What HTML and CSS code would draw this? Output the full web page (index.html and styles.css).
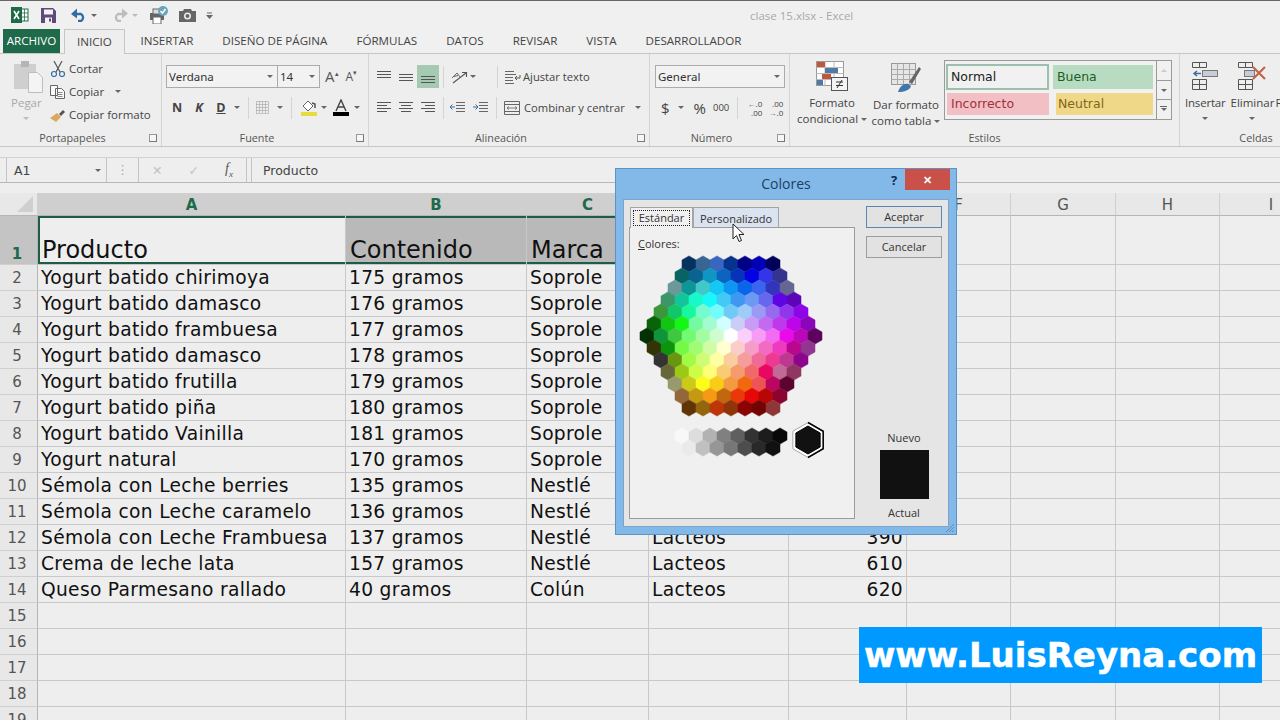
FILE: index.html

```html
<!DOCTYPE html>
<html lang="es">
<head>
    <meta charset="UTF-8">
    <title>clase 15.xlsx - Excel</title>
    <link rel="stylesheet" href="styles.css">
</head>
<body>

<!-- Quick access + title -->
<div class="titlebar">
    <div class="quick">
        <svg width="18" height="16" viewBox="0 0 18 16"><rect x="7" y="2" width="10" height="12" fill="#fff" stroke="#1e6b47"/><path d="M10 2v12M13.5 2v12M7 6h10M7 10h10" stroke="#1e6b47" stroke-width=".8"/><rect x="0" y="0" width="11" height="16" fill="#1e6b47"/><path d="M3 4l5 8M8 4l-5 8" stroke="#fff" stroke-width="1.6"/></svg>
        <svg class="q-save" width="15" height="15" viewBox="0 0 15 15"><path d="M0 0h12l3 3v12H0z" fill="#5d4a78"/><rect x="3" y="1.5" width="9" height="5" fill="#f2f0f5"/><rect x="4" y="9.5" width="7" height="5.5" fill="#f2f0f5"/><rect x="8" y="10.5" width="2" height="3" fill="#5d4a78"/></svg>
        <svg class="q-undo" width="16" height="14" viewBox="0 0 16 14"><path d="M2 6h8a4 4 0 0 1 0 7H7" fill="none" stroke="#2f6ea5" stroke-width="2.4"/><path d="M6 0v10L0 5.500z" fill="#2f6ea5" transform="translate(0 .5)"/></svg>
        <i class="caret q-caret1"></i>
        <svg class="q-redo" width="16" height="14" viewBox="0 0 16 14"><path d="M14 6H6a4 4 0 0 0 0 7h3" fill="none" stroke="#bdbdbd" stroke-width="2.400"/><path d="M10 .5v10l6-5z" fill="#bdbdbd"/></svg>
        <i class="caret q-caret2 caret-light"></i>
        <svg class="q-print" width="19" height="18" viewBox="0 0 19 18"><rect x="0" y="7" width="14" height="7" fill="#666"/><rect x="3" y="11" width="8" height="7" fill="#fff" stroke="#666"/><rect x="3" y="3" width="8" height="5" fill="#ddd" stroke="#666"/><circle cx="13" cy="5" r="5" fill="#6aa6b8"/><path d="M10.500 5l2 2 3-4" fill="none" stroke="#fff" stroke-width="1.500"/></svg>
        <svg class="q-camera" width="17" height="14" viewBox="0 0 17 14"><path d="M0 3h4l1-2h7l1 2h4v11H0z" fill="#666"/><circle cx="8.500" cy="8" r="3.500" fill="#eee"/><circle cx="8.500" cy="8" r="2" fill="#666"/></svg>
        <svg class="q-more" width="7" height="7" viewBox="0 0 7 7"><path d="M1 1h5" stroke="#666"/><path d="M0 3h7L3.500 7z" fill="#666"/></svg>
    </div>
    <div class="doc-title">clase 15.xlsx - Excel</div>
</div>

<!-- Tabs -->
<div class="tabs">
    <div class="tab tab-file">ARCHIVO</div>
    <div class="tab tab-active">INICIO</div>
    <div class="tab">INSERTAR</div>
    <div class="tab">DISEÑO DE PÁGINA</div>
    <div class="tab">FÓRMULAS</div>
    <div class="tab">DATOS</div>
    <div class="tab">REVISAR</div>
    <div class="tab">VISTA</div>
    <div class="tab">DESARROLLADOR</div>
</div>

<!-- Ribbon -->
<div class="ribbon">

    <div class="group g-clip">
        <div class="group-body">
            <div class="paste">
                <svg width="29" height="32" viewBox="0 0 29 32"><rect x="0" y="3" width="22" height="25" fill="#cfcfcf"/><rect x="7" y="0" width="8" height="6" fill="#b5b5b5"/><path d="M14.500 11.500h9l5 5v15h-14z" fill="#f4f4f4" stroke="#bdbdbd"/></svg>
                <span class="paste-label">Pegar</span>
                <i class="caret caret-light"></i>
            </div>
            <div class="clip-list">
                <div class="clip-row"><svg width="16" height="16" viewBox="0 0 16 16"><path d="M4 0l6 11M12 0L6 11" stroke="#555" stroke-width="1.200"/><circle cx="4" cy="13" r="2.500" fill="none" stroke="#2f6ea5" stroke-width="1.200"/><circle cx="12" cy="13" r="2.500" fill="none" stroke="#2f6ea5" stroke-width="1.200"/></svg>Cortar</div>
                <div class="clip-row"><svg width="16" height="14" viewBox="0 0 16 14"><path d="M.5.500h7v10h-7zM5.500 3.500h6l3 3v7h-9z" fill="#fafafa" stroke="#666"/><path d="M7.500 7.500h5M7.500 9.500h5M7.500 11.500h5" stroke="#888"/></svg>Copiar<i class="caret clip-caret"></i></div>
                <div class="clip-row"><svg width="16" height="14" viewBox="0 0 16 14"><path d="M0 10l7-5 4 4-5 5z" fill="#d9a860"/><path d="M9 6l4-4 2 2-4 4z" fill="#555"/></svg>Copiar formato</div>
            </div>
        </div>
        <div class="group-label">Portapapeles</div>
        <i class="launcher"></i>
    </div>

    <div class="group g-font">
        <div class="group-body stack">
            <div class="tool-row">
                <div class="combo combo-font">Verdana<i class="caret"></i></div>
                <div class="combo combo-size">14<i class="caret"></i></div>
                <span class="grow-a big">A<sup>▴</sup></span>
                <span class="grow-a small">A<sup>▾</sup></span>
            </div>
            <div class="tool-row row-format">
                <span class="fmt fmt-b">N</span>
                <span class="fmt fmt-i">K</span>
                <span class="fmt fmt-u">D</span>
                <i class="caret"></i>
                <span class="sep"></span>
                <svg class="ico-border" width="13" height="13" viewBox="0 0 13 13"><path d="M.5.500h12v12H.5zM6.500.500v12M.5 6.500h12M3.500.500v12M9.500.500v12M.5 3.500h12M.5 9.500h12" fill="none" stroke="#999" stroke-dasharray="1 1"/></svg>
                <i class="caret"></i>
                <span class="sep"></span>
                <svg class="ico-fill" width="16" height="18" viewBox="0 0 16 18"><path d="M2 7l5-5 5 5-5 5z" fill="#fff" stroke="#666"/><path d="M11 4l3 1v4" fill="none" stroke="#555" stroke-width="1.500"/><rect x="0" y="13" width="16" height="4" fill="#e7dc3f"/></svg>
                <i class="caret"></i>
                <svg class="ico-color" width="16" height="18" viewBox="0 0 16 18"><path d="M3 12L8 1l5 11M5 8h6" fill="none" stroke="#444" stroke-width="1.400"/><rect y="13" width="16" height="4" fill="#000"/></svg>
                <i class="caret"></i>
            </div>
        </div>
        <div class="group-label">Fuente</div>
        <i class="launcher"></i>
    </div>

    <div class="group g-align">
        <div class="group-body stack">
            <div class="tool-row">
                <span class="al"><svg width="14" height="14" viewBox="0 0 14 14"><path d="M0 1.500h14M0 4.500h14M0 7.500h14" stroke="#555"/></svg></span>
                <span class="al"><svg width="14" height="14" viewBox="0 0 14 14"><path d="M0 4.500h14M0 7.500h14M0 10.500h14" stroke="#555"/></svg></span>
                <span class="al al-on"><svg width="14" height="14" viewBox="0 0 14 14"><path d="M0 6.500h14M0 9.500h14M0 12.500h14" stroke="#555"/></svg></span>
                <span class="sep"></span>
                <svg class="ico-orient" width="18" height="14" viewBox="0 0 18 14"><path d="M1 8l5-5 3 4M3 6.500l4-1" fill="none" stroke="#666"/><path d="M2 13L15 3M11 2.500h4.500V7" fill="none" stroke="#555" stroke-width="1.100"/></svg>
                <i class="caret"></i>
                <span class="sep sep-wrap"></span>
                <span class="al-text"><svg width="16" height="14" viewBox="0 0 16 14"><path d="M0 1.500h9M0 4.500h11M0 7.500h8M0 10.500h8M0 13.500h9" stroke="#666"/><path d="M15 5v3h-5M12 6l-2 2 2 2" fill="none" stroke="#555"/></svg>Ajustar texto</span>
            </div>
            <div class="tool-row">
                <span class="al"><svg width="14" height="14" viewBox="0 0 14 14"><path d="M0 1.500h14M0 4.500h10M0 7.500h14M0 10.500h10" stroke="#555"/></svg></span>
                <span class="al"><svg width="14" height="14" viewBox="0 0 14 14"><path d="M0 1.500h14M2 4.500h10M0 7.500h14M2 10.500h10" stroke="#555"/></svg></span>
                <span class="al"><svg width="14" height="14" viewBox="0 0 14 14"><path d="M0 1.500h14M4 4.500h10M0 7.500h14M4 10.500h10" stroke="#555"/></svg></span>
                <span class="sep"></span>
                <svg class="ico-indent" width="15" height="12" viewBox="0 0 15 12"><path d="M6 .5h9M6 3.500h9M6 6.500h9M6 9.500h9" stroke="#666"/><path d="M5 5H0M2.500 2.500L0 5l2.500 2.500" fill="none" stroke="#2f6ea5"/></svg>
                <svg class="ico-indent2" width="15" height="12" viewBox="0 0 15 12"><path d="M6 .5h9M6 3.500h9M6 6.500h9M6 9.500h9" stroke="#666"/><path d="M0 5h5M2.500 2.500L5 5 2.500 7.500" fill="none" stroke="#2f6ea5"/></svg>
                <span class="sep sep-wrap2"></span>
                <span class="al-text al-merge"><svg width="16" height="14" viewBox="0 0 16 14"><path d="M.5.500h15v13H.5zM.5 3.500h15M.5 10.500h15" fill="none" stroke="#666"/><path d="M3 7h10M5 5.500L3 7l2 1.500M11 5.500L13 7l-2 1.500" fill="none" stroke="#666" stroke-width=".8"/></svg>Combinar y centrar</span>
                <i class="caret caret-merge"></i>
            </div>
        </div>
        <div class="group-label">Alineación</div>
        <i class="launcher"></i>
    </div>

    <div class="group g-number">
        <div class="group-body stack">
            <div class="tool-row">
                <div class="combo combo-num">General<i class="caret"></i></div>
            </div>
            <div class="tool-row num-row">
                <span class="n-dollar">$</span>
                <i class="caret"></i>
                <span class="n-pct">%</span>
                <span class="n-mil">000</span>
                <span class="sep"></span>
                <span class="n-dec"><span><b>←</b>.0</span><span>.00</span></span>
                <span class="n-dec"><span>.00</span><span><b>→</b>.0</span></span>
            </div>
        </div>
        <div class="group-label">Número</div>
        <i class="launcher"></i>
    </div>

    <div class="group g-styles">
        <div class="group-body">
            <div class="big-btn btn-cond">
                <svg width="32" height="30" viewBox="0 0 32 30"><rect x=".5" y=".5" width="27" height="24" fill="#fff" stroke="#999"/><path d="M9 .5v24M18 .5v24M.5 6.500h27M.5 12.500h27M.5 18.500h27" stroke="#bbb"/><rect x="1" y="1" width="8" height="5" fill="#c0573d"/><rect x="9" y="7" width="13" height="5" fill="#4f7aa5"/><rect x="6" y="13" width="9" height="5" fill="#c0573d"/><rect x="1" y="19" width="6" height="5" fill="#4f7aa5"/><rect x="15.500" y="16.500" width="16" height="13" fill="#f4f4f4" stroke="#555"/><path d="M20 21h7M20 24.500h7M26 19l-5 8" stroke="#333"/></svg>
                <span>Formato</span>
                <span>condicional<i class="caret"></i></span>
            </div>
            <div class="big-btn btn-table">
                <svg width="30" height="30" viewBox="0 0 30 30"><rect x=".5" y=".5" width="24" height="21" fill="#e6e6e6" stroke="#999"/><path d="M6.500.5v21M12.500.5v21M18.500.5v21M.5 6.500h24M.5 11.500h24M.5 16.500h24" stroke="#aaa"/><path d="M18 19L28 4l2 2-9 15z" fill="#666"/><path d="M7 29c2-6 6-9 10-8l3 2c-1 4-7 6-13 6z" fill="#3f77ab"/></svg>
                <span>Dar formato</span>
                <span>como tabla<i class="caret"></i></span>
            </div>
            <div class="gallery">
                <div class="gallery-grid">
                    <div class="st st-normal">Normal</div>
                    <div class="st st-good">Buena</div>
                    <div class="st st-bad">Incorrecto</div>
                    <div class="st st-neutral">Neutral</div>
                </div>
                <div class="gallery-scroll">
                    <span><i class="caret caret-up"></i></span>
                    <span><i class="caret"></i></span>
                    <span class="more"><i class="caret"></i></span>
                </div>
            </div>
        </div>
        <div class="group-label">Estilos</div>
    </div>

    <div class="group g-cells">
        <div class="group-body">
            <div class="cell-btn">
                <svg width="28" height="28" viewBox="0 0 28 28"><path d="M1.500.5h14v5h-14zM8.500.5v5M1.500 17.500h14v10h-14zM8.500 17.500v10M1.500 22.500h14" fill="none" stroke="#555"/><rect x="11.500" y="8.500" width="15" height="6" fill="#c6cdd8" stroke="#777"/><path d="M3 11.500h7M6 9l-3 2.500L6 14" fill="none" stroke="#3f6e9b" stroke-width="1.500"/></svg>
                <span>Insertar</span>
                <i class="caret"></i>
            </div>
            <div class="cell-btn cell-del">
                <svg width="30" height="28" viewBox="0 0 30 28"><path d="M1.500.5h14v5h-14zM8.500.5v5M1.500 17.500h14v10h-14zM8.500 17.500v10M1.500 22.500h14" fill="none" stroke="#555"/><rect x="7.500" y="8.500" width="10" height="6" fill="#c6cdd8" stroke="#777"/><path d="M16 5l12 12M28 5L16 17" stroke="#c0654a" stroke-width="2.200"/></svg>
                <span>Eliminar</span>
                <i class="caret"></i>
            </div>
            <div class="cell-btn cell-cut"><span>Formato</span></div>
        </div>
        <div class="group-label">Celdas</div>
    </div>
</div>

<!-- Formula bar -->
<div class="formula-bar">
    <div class="name-box">A1<i class="caret"></i></div>
    <span class="fx-dots">⋮</span>
    <div class="fx-btns">
        <span class="fx-x">✕</span>
        <span class="fx-x">✓</span>
        <span class="fx-f">f<sub>x</sub></span>
    </div>
    <div class="fx-input">Producto</div>
</div>

<!-- Sheet -->
<div class="sheet-gap"></div>
<table class="sheet">
    <colgroup>
        <col class="c-head"><col class="c-a"><col class="c-b"><col class="c-c"><col class="c-d"><col class="c-e"><col class="c-f"><col class="c-g"><col class="c-h"><col class="c-i">
    </colgroup>
    <tr class="col-heads">
        <th class="corner"><i></i></th><th class="on">A</th><th class="on">B</th><th class="on">C</th><th></th><th></th><th>F</th><th>G</th><th>H</th><th>I</th>
    </tr>
    <tr class="row-first">
        <th class="row-no on">1</th>
        <td class="sel sel-a">Producto</td><td class="sel sel-dark">Contenido</td><td class="sel sel-dark">Marca</td><td></td><td></td><td></td><td></td><td></td><td></td>
    </tr>
    <tr><th class="row-no">2</th><td>Yogurt batido chirimoya</td><td>175 gramos</td><td>Soprole</td><td></td><td></td><td></td><td></td><td></td><td></td></tr>
    <tr><th class="row-no">3</th><td>Yogurt batido damasco</td><td>176 gramos</td><td>Soprole</td><td></td><td></td><td></td><td></td><td></td><td></td></tr>
    <tr><th class="row-no">4</th><td>Yogurt batido frambuesa</td><td>177 gramos</td><td>Soprole</td><td></td><td></td><td></td><td></td><td></td><td></td></tr>
    <tr><th class="row-no">5</th><td>Yogurt batido damasco</td><td>178 gramos</td><td>Soprole</td><td></td><td></td><td></td><td></td><td></td><td></td></tr>
    <tr><th class="row-no">6</th><td>Yogurt batido frutilla</td><td>179 gramos</td><td>Soprole</td><td></td><td></td><td></td><td></td><td></td><td></td></tr>
    <tr><th class="row-no">7</th><td>Yogurt batido piña</td><td>180 gramos</td><td>Soprole</td><td></td><td></td><td></td><td></td><td></td><td></td></tr>
    <tr><th class="row-no">8</th><td>Yogurt batido Vainilla</td><td>181 gramos</td><td>Soprole</td><td></td><td></td><td></td><td></td><td></td><td></td></tr>
    <tr><th class="row-no">9</th><td>Yogurt natural</td><td>170 gramos</td><td>Soprole</td><td></td><td></td><td></td><td></td><td></td><td></td></tr>
    <tr><th class="row-no">10</th><td>Sémola con Leche berries</td><td>135 gramos</td><td>Nestlé</td><td></td><td></td><td></td><td></td><td></td><td></td></tr>
    <tr><th class="row-no">11</th><td>Sémola con Leche caramelo</td><td>136 gramos</td><td>Nestlé</td><td></td><td></td><td></td><td></td><td></td><td></td></tr>
    <tr><th class="row-no">12</th><td>Sémola con Leche Frambuesa</td><td>137 gramos</td><td>Nestlé</td><td>Lacteos</td><td class="num">390</td><td></td><td></td><td></td><td></td></tr>
    <tr><th class="row-no">13</th><td>Crema de leche lata</td><td>157 gramos</td><td>Nestlé</td><td>Lacteos</td><td class="num">610</td><td></td><td></td><td></td><td></td></tr>
    <tr><th class="row-no">14</th><td>Queso Parmesano rallado</td><td>40 gramos</td><td>Colún</td><td>Lacteos</td><td class="num">620</td><td></td><td></td><td></td><td></td></tr>
    <tr><th class="row-no">15</th><td></td><td></td><td></td><td></td><td></td><td></td><td></td><td></td><td></td></tr>
    <tr><th class="row-no">16</th><td></td><td></td><td></td><td></td><td></td><td></td><td></td><td></td><td></td></tr>
    <tr><th class="row-no">17</th><td></td><td></td><td></td><td></td><td></td><td></td><td></td><td></td><td></td></tr>
    <tr><th class="row-no">18</th><td></td><td></td><td></td><td></td><td></td><td></td><td></td><td></td><td></td></tr>
    <tr><th class="row-no">19</th><td></td><td></td><td></td><td></td><td></td><td></td><td></td><td></td><td></td></tr>
</table>

<!-- Colores dialog -->
<div class="dialog">
    <div class="dialog-title">
        <span class="dialog-name">Colores</span>
        <span class="dialog-help">?</span>
        <span class="dialog-close">✕</span>
    </div>
    <div class="dialog-panel">
        <div class="dialog-left">
            <div class="dialog-tabs">
                <div class="d-tab d-tab-on"><span>Estándar</span></div>
                <div class="d-tab">Personalizado</div>
            </div>
            <div class="d-page">
                <div class="d-label"><u>C</u>olores:</div>
                <svg id="hexes" class="hexes" width="224" height="216"></svg>
            </div>
        </div>
        <div class="dialog-right">
            <div class="d-btn d-btn-default">Aceptar</div>
            <div class="d-btn">Cancelar</div>
            <div class="swatch-box">
                <span>Nuevo</span>
                <div class="swatch"></div>
                <span class="swatch-actual">Actual</span>
            </div>
        </div>
    </div>
    <svg class="grip" width="10" height="10" viewBox="0 0 10 10"><path d="M9 1L1 9M9 4L4 9M9 7L7 9" stroke="#5f8fb8"/></svg>
</div>

<!-- Mouse pointer -->
<svg class="pointer" width="14" height="20" viewBox="0 0 14 20"><path d="M1 1v15l3.500-3.500 2.500 6 2.500-1-2.500-6h5z" fill="#fff" stroke="#222"/></svg>

<div class="watermark">www.LuisReyna.com</div>

<script src="script.js"></script>
</body>
</html>
```

FILE: styles.css

```css
* {
    box-sizing: border-box;
}

body {
    margin: 0;
    width: 1280px;
    height: 720px;
    overflow: hidden;
    position: relative;
    background-color: #eeeeee;
    color: #444;
    font-family: 'Open Sans', sans-serif;
    font-size: 11.5px;
}

/* small dropdown triangle used everywhere */
.caret {
    display: inline-block;
    width: 0;
    height: 0;
    border-left: 3px solid transparent;
    border-right: 3px solid transparent;
    border-top: 3px solid #666;
}

.caret-light {
    border-top-color: #bbb;
}

.caret-up {
    border-top: 0;
    border-bottom: 3px solid #ccc;
}

.sep {
    display: inline-block;
    width: 1px;
    height: 22px;
    background-color: #d4d4d4;
}

/* Title bar */
.titlebar {
    height: 29px;
    border-top: 1px solid #666;
    display: flex;
    align-items: center;
    background-color: #f0f0f0;
}

.quick {
    display: flex;
    align-items: center;
    width: 750px;
    padding-left: 11px;
}

.q-save { margin-left: 12px; }
.q-undo { margin-left: 15px; }
.q-caret1 { margin-left: 4px; }
.q-redo { margin-left: 15px; }
.q-caret2 { margin-left: 4px; }
.q-print { margin-left: 12px; }
.q-camera { margin-left: 10px; }
.q-more { margin-left: 10px; }

.doc-title {
    color: #a8a8a8;
}

/* Tabs */
.tabs {
    height: 25px;
    display: flex;
    align-items: stretch;
    padding-left: 3px;
    border-bottom: 1px solid #c6c6c6;
    background-color: #f0f0f0;
}

.tab {
    padding: 4px 14.5px 0;
    color: #444;
    font-size: 11.6px;
}

.tab-file {
    width: 57px;
    padding: 4px 0 0;
    text-align: center;
    background-color: #1f6a4a;
    color: #fff;
    margin-right: 4px;
}

.tab-active {
    width: 61px;
    padding: 4px 0 0;
    text-align: center;
    height: 25px;
    border: 1px solid #c6c6c6;
    border-bottom: 0;
    background-color: #eeeeee;
    margin-right: 1px;
}

/* Ribbon */
.ribbon {
    height: 93px;
    display: flex;
    border-bottom: 1px solid #c6c6c6;
    background-color: #eeeeee;
}

.group {
    position: relative;
    display: flex;
    flex-direction: column;
    height: 92px;
    border-right: 1px solid #d4d4d4;
    flex: none;
}

.group-body {
    flex: 1;
    display: flex;
    min-height: 0;
}

.stack {
    flex-direction: column;
    padding-top: 11px;
    gap: 8px;
}

.group-label {
    height: 16px;
    line-height: 16px;
    padding-right: 16px;
    text-align: center;
    font-size: 10.8px;
    color: #555;
}

.launcher {
    position: absolute;
    right: 4px;
    bottom: 4px;
    width: 8px;
    height: 8px;
    border: 1px solid #999;
    border-right-color: #777;
    border-bottom-color: #777;
    background-color: #f6f6f6;
}

.tool-row {
    display: flex;
    align-items: center;
    height: 23px;
}

.g-clip { width: 162px; }
.g-font { width: 207px; }
.g-align { width: 281px; }
.g-number { width: 140px; }
.g-styles { width: 390px; }
.g-cells { width: 100px; border-right: 0; }

.g-styles .group-label {
    padding-right: 0;
}

.g-cells .group-label {
    padding: 0 0 0 47px;
}

/* Portapapeles */
.paste {
    width: 50px;
    padding: 7px 0 0 14px;
    display: flex;
    flex-direction: column;
    align-items: flex-start;
    color: #aaa;
}

.paste-label {
    margin: 2px 0 0 -3px;
    line-height: 16px;
}

.paste .caret {
    margin: 6px 0 0 9px;
}

.clip-list {
    padding-top: 3px;
}

.clip-row {
    height: 23px;
    display: flex;
    align-items: center;
    gap: 3px;
    white-space: nowrap;
}

.clip-row svg {
    flex: none;
}

.clip-caret {
    margin-left: 8px;
}

/* Fuente */
.g-font .tool-row {
    padding-left: 4px;
}

.combo {
    height: 23px;
    border: 1px solid #ababab;
    background-color: #f2f2f2;
    display: flex;
    align-items: center;
    justify-content: space-between;
    padding: 0 4px 0 2px;
    color: #333;
    font-family: 'Noto Sans', sans-serif;
    font-size: 11.500px;
}

.combo-font { width: 112px; }
.combo-size { width: 43px; margin-left: -1px; }

.grow-a {
    display: inline-block;
    color: #555;
    line-height: 1;
}

.grow-a sup {
    font-size: 7px;
    vertical-align: 6px;
    line-height: 0;
}

.grow-a.big { font-size: 15px; margin-left: 5px; }
.grow-a.small { font-size: 12px; margin-left: 7px; }

.row-format .fmt {
    width: 22px;
    text-align: center;
    font-weight: 700;
    font-size: 12.500px;
    color: #444;
}

.row-format {
    padding-left: 4px !important;
}

.fmt-i { font-style: italic; }
.fmt-u { text-decoration: underline; }

.row-format .sep { margin: 0 0 0 8px; }
.ico-border { margin-left: 7px; margin-right: 8px; }
.ico-fill { margin-left: 9px; margin-right: 4px; }
.ico-color { margin-left: 6px; margin-right: 5px; }
.fmt + .caret { margin-left: 2px; }

/* Alineacion */
.g-align .tool-row {
    padding-left: 4px;
}

.al {
    width: 22px;
    height: 23px;
    display: flex;
    align-items: center;
    justify-content: center;
}

.al-on {
    background-color: #a6c9b2;
}

.g-align .sep {
    margin: 0 3px 0 4px;
}

.ico-orient { margin: 0 1px 0 4px; }
.ico-indent { margin-left: 3px; }
.ico-indent2 { margin-left: 8px; }
.sep-wrap { margin-left: 21px !important; margin-right: 7px !important; }
.sep-wrap2 { margin-left: 8px !important; margin-right: 7px !important; }

.al-text {
    display: flex;
    align-items: center;
    gap: 2px;
    white-space: nowrap;
    font-size: 11.2px;
}

.al-merge {
    gap: 4px;
}

.caret-merge {
    margin-left: 10px;
}

/* Numero */
.g-number .tool-row {
    padding-left: 5px;
}

.combo-num {
    width: 130px;
}

.num-row .sep {
    margin: 0 8px;
}

.n-dollar {
    margin-left: 6px;
    font-size: 15px;
    margin-right: 8px;
}

.n-pct {
    font-size: 15px;
    margin-left: 10px;
}

.n-mil {
    font-size: 9.5px;
    margin-left: 7px;
}

.n-dec {
    display: flex;
    flex-direction: column;
    align-items: flex-end;
    font-size: 8px;
    line-height: 9px;
    width: 16px;
    margin-right: 5px;
}

.n-dec b {
    font-weight: 400;
    color: #2f6ea5;
}

/* Estilos */
.big-btn {
    display: flex;
    flex-direction: column;
    align-items: center;
    line-height: 16px;
    white-space: nowrap;
}

.big-btn svg {
    margin-bottom: 4px;
}

.big-btn .caret {
    margin-left: 3px;
    vertical-align: 2px;
}

.btn-cond {
    width: 72px;
    margin-left: 6px;
    padding-top: 7px;
}

.btn-table {
    width: 72px;
    margin-left: 2px;
    padding-top: 9px;
}

.gallery {
    margin: 6px 0 0 2px;
    width: 228px;
    height: 60px;
    display: flex;
    border: 1px solid #9a9a9a;
    background-color: #f1f1f1;
}

.gallery-grid {
    flex: 1;
    display: grid;
    grid-template-columns: 103px 100px;
    grid-template-rows: 26px 22px;
    gap: 3px 4px;
    padding: 3px 0 0 1px;
}

.st {
    display: flex;
    align-items: center;
    padding: 0 0 2px 4px;
    font-family: 'DejaVu Sans', sans-serif;
    font-size: 12.500px;
}

.st-normal {
    border: 2px solid #9cbfae;
    padding-left: 3px;
    color: #222;
}

.st-good {
    background-color: #b7dcc1;
    color: #1d5e22;
    margin: 1px 0;
}

.st-bad {
    background-color: #f2bfc4;
    color: #a0303a;
    margin-left: 1px;
}

.st-neutral {
    background-color: #efd988;
    color: #85651a;
    margin-left: 3px;
    padding-left: 2px;
}

.gallery-scroll {
    width: 15px;
    display: flex;
    flex-direction: column;
    border-left: 1px solid #9a9a9a;
}

.gallery-scroll span {
    flex: 1;
    display: flex;
    align-items: center;
    justify-content: center;
    border-bottom: 1px solid #9a9a9a;
}

.gallery-scroll span:last-child {
    border-bottom: 0;
}

.gallery-scroll .more {
    position: relative;
}

.gallery-scroll .more::before {
    content: "";
    position: absolute;
    top: 6px;
    left: 3px;
    width: 7px;
    height: 1px;
    background-color: #666;
}

/* Celdas */
.cell-btn {
    width: 44px;
    display: flex;
    flex-direction: column;
    align-items: center;
    padding-top: 8px;
    white-space: nowrap;
    letter-spacing: -0.2px;
}

.cell-btn svg {
    margin-bottom: 5px;
}

.cell-btn .caret {
    margin-top: 7px;
}

.g-cells {
    overflow: hidden;
    padding-left: 5px;
}

.cell-del {
    margin-left: 5px;
    letter-spacing: 0;
}

.cell-cut {
    padding-top: 41px;
    align-items: flex-start;
    margin-left: 1px;
    letter-spacing: 0;
}

/* Formula bar */
.formula-bar {
    height: 26px;
    margin-top: 10px;
    display: flex;
    align-items: stretch;
    padding-left: 6px;
    border-top: 1px solid #d2d2d2;
    border-bottom: 1px solid #b8b8b8;
    font-family: 'DejaVu Sans', sans-serif;
    font-size: 12.500px;
    color: #444;
}

.name-box {
    width: 101px;
    display: flex;
    align-items: center;
    justify-content: space-between;
    padding: 0 5px 0 7px;
    border-left: 1px solid #c4c4c4;
    border-right: 1px solid #c4c4c4;
}

.fx-dots {
    width: 31px;
    text-align: center;
    line-height: 24px;
    color: #aaa;
}

.fx-btns {
    width: 109px;
    display: flex;
    justify-content: space-around;
    align-items: center;
    border-left: 1px solid #c4c4c4;
    border-right: 1px solid #c4c4c4;
    margin-right: 4px;
}

.fx-x {
    color: #c2c2c2;
}

.fx-f {
    font-family: 'Liberation Serif', serif;
    font-style: italic;
    font-size: 14px;
    color: #555;
}

.fx-f sub {
    font-size: 9px;
}

.fx-input {
    flex: 1;
    padding-left: 11px;
    line-height: 25px;
    border-left: 1px solid #c4c4c4;
}

.sheet-gap {
    height: 10px;
}

/* Sheet */
.sheet {
    width: 1323px;
    table-layout: fixed;
    border-collapse: separate;
    border-spacing: 0;
    font-family: 'DejaVu Sans', sans-serif;
    font-size: 18.67px;
    letter-spacing: 0.3px;
    color: #111;
}

.c-head { width: 38px; }
.c-a { width: 308px; }
.c-b { width: 181px; }
.c-c { width: 122px; }
.c-d { width: 140px; }
.c-e { width: 118px; }
.c-f { width: 104px; }
.c-g { width: 105px; }
.c-h { width: 104px; }
.c-i { width: 103px; }

.sheet tr {
    height: 26px;
}

.sheet .col-heads {
    height: 23px;
}

.sheet td {
    padding: 0 0 0 3px;
    border-right: 1px solid #c8c8c8;
    border-bottom: 1px solid #c8c8c8;
    white-space: nowrap;
    overflow: hidden;
    line-height: 24px;
}

.sheet td.num {
    padding: 0 3px 0 0;
    text-align: right;
}

.col-heads th {
    padding: 2px 0 0;
    background-color: #e8e8e8;
    border-right: 1px solid #cfcfcf;
    border-bottom: 1px solid #b5b5b5;
    font-weight: 400;
    font-size: 15px;
    line-height: 20px;
    letter-spacing: 0;
    color: #555;
}

.col-heads th.on {
    background-color: #cfcfcf;
    color: #1f6a4a;
    font-weight: 700;
}

.col-heads th.corner {
    position: relative;
    padding: 0;
}

.corner i {
    position: absolute;
    right: 4px;
    bottom: 3px;
    width: 0;
    height: 0;
    border-left: 16px solid transparent;
    border-bottom: 16px solid #cfcfcf;
}

.row-no {
    padding: 0 3px 0 0;
    background-color: #e8e8e8;
    border-right: 1px solid #b5b5b5;
    border-bottom: 1px solid #cfcfcf;
    font-weight: 400;
    font-size: 15px;
    line-height: 20px;
    letter-spacing: 0;
    color: #555;
    text-align: center;
}

.sheet .row-first {
    height: 49px;
}

.row-first .row-no {
    background-color: #c4c4c4;
    color: #1f6a4a;
    font-weight: 700;
    vertical-align: bottom;
}

.sheet .row-first td {
    vertical-align: bottom;
    padding-bottom: 0;
    font-size: 24px;
    line-height: 28px;
    letter-spacing: 0;
}

.sheet td.sel {
    padding-left: 4px;
    box-shadow: inset 0 2px #1f5c46, inset 0 -2px #1f5c46;
}

.sheet td.sel-a {
    background-color: #eeeeee;
    box-shadow: inset 2px 0 #1f5c46, inset 0 2px #1f5c46, inset 0 -2px #1f5c46;
}

.sheet td.sel-dark {
    background-color: #b9b9b9;
}

/* Dialog */
.dialog {
    position: absolute;
    left: 615px;
    top: 168px;
    width: 342px;
    height: 367px;
    display: flex;
    flex-direction: column;
    background-color: #83b9e8;
    border: 1px solid #5d93c4;
    padding: 0 7px 7px;
    font-family: 'Open Sans', sans-serif;
    font-size: 11px;
    line-height: 16px;
    color: #333;
}

.dialog-title {
    height: 30px;
    position: relative;
    text-align: center;
    flex: none;
}

.dialog-name {
    display: block;
    font-size: 14px;
    line-height: 30px;
    color: #1b3f63;
}

.dialog-help {
    position: absolute;
    left: 268px;
    top: 3px;
    font-weight: 700;
    font-size: 13px;
    color: #0c2a5e;
}

.dialog-close {
    position: absolute;
    right: -1px;
    top: 0;
    width: 45px;
    height: 21px;
    background-color: #c9514a;
    color: #fff;
    font-size: 11px;
    font-weight: 700;
    line-height: 21px;
}

.dialog-panel {
    flex: 1;
    display: flex;
    background-color: #e5e5e5;
    border: 1px solid #7da5c9;
    padding: 6px 0 7px 5px;
}

.dialog-left {
    width: 226px;
    display: flex;
    flex-direction: column;
}

.dialog-tabs {
    height: 21px;
    display: flex;
    align-items: flex-end;
    padding-left: 1px;
    flex: none;
}

.d-tab {
    height: 20px;
    padding: 1px 6px 0;
    border: 1px solid #a5a5a5;
    border-bottom: 0;
    background-color: #dae3ef;
    line-height: 19px;
}

.d-tab-on {
    height: 21px;
    width: 63px;
    padding: 2px;
    background-color: #f0f0f0;
    margin-bottom: -1px;
    position: relative;
}

.d-tab-on span {
    display: block;
    border: 1px dotted #222;
    line-height: 14px;
    text-align: center;
}

.d-page {
    flex: 1;
    background-color: #f0f0f0;
    border: 1px solid #9c9c9c;
    padding: 8px 0 0 8px;
}

.d-label {
    line-height: 16px;
}

.hexes {
    display: block;
    margin: 0 0 0 -8px;
    filter: blur(0.4px) saturate(0.88);
}

.dialog-right {
    flex: 1;
    display: flex;
    flex-direction: column;
    padding-left: 11px;
}

.d-btn {
    width: 76px;
    height: 22px;
    margin-bottom: 8px;
    border: 1px solid #9c9c9c;
    background-color: #e2e2e2;
    text-align: center;
    line-height: 20px;
}

.d-btn-default {
    border-color: #5a84b4;
}

.swatch-box {
    margin-top: auto;
    margin-bottom: -2px;
    width: 76px;
    display: flex;
    flex-direction: column;
    align-items: center;
    gap: 4px;
}

.swatch-actual {
    margin-top: 2px;
}

.swatch {
    width: 49px;
    height: 49px;
    background-color: #111;
}

.grip {
    position: absolute;
    right: 1px;
    bottom: 1px;
}

.pointer {
    position: absolute;
    left: 732px;
    top: 223px;
}

.watermark {
    position: absolute;
    left: 859px;
    top: 627px;
    width: 403px;
    height: 56px;
    background-color: #0099ff;
    color: #fff;
    font-family: 'DejaVu Sans', sans-serif;
    font-weight: 700;
    font-size: 34px;
    -webkit-text-stroke: 0.5px #fff;
    line-height: 56px;
    text-align: center;
    white-space: nowrap;
}
```

FILE: script.js

```js
// Office style colour honeycomb, rows are centred on the same x
const colorRows = [
    "003366 336699 3366CC 003399 000099 0000CC 000066",
    "006666 006699 0099CC 0066CC 0033CC 0000FF 3333FF 333399",
    "669999 009999 33CCCC 00CCFF 0099FF 0066FF 3366FF 3333CC 666699",
    "339966 00CC99 00FFCC 00FFFF 33CCFF 3399FF 6699FF 6666FF 6600FF 6600CC",
    "339933 00CC66 00FF99 66FFCC 66FFFF 66CCFF 99CCFF 9999FF 9966FF 9933FF 9900FF",
    "006600 00CC00 00FF00 66FF99 99FFCC CCFFFF CCCCFF CC99FF CC66FF CC33FF CC00FF 9900CC",
    "003300 009933 33CC33 66FF66 99FF99 CCFFCC FFFFFF FFCCFF FF99FF FF66FF FF00FF CC00CC 660066",
    "333300 009900 66FF33 99FF66 CCFF99 FFFFCC FFCCCC FF99CC FF66CC FF33CC CC0099 993399",
    "333333 669900 99FF33 CCFF66 FFFF99 FFCC99 FF9999 FF6699 FF3399 CC3399 990099",
    "666633 99CC00 CCFF33 FFFF66 FFCC66 FF9966 FF6666 FF0066 CC6699 993366",
    "999966 CCCC00 FFFF00 FFCC00 FF9933 FF6600 FF5050 CC0066 660033",
    "996633 CC9900 FF9900 CC6600 FF3300 FF0000 CC0000 990033",
    "663300 996600 CC3300 993300 990000 800000 993333"
];

const grayTop = ["F8F8F8", "DDDDDD", "B2B2B2", "808080", "5F5F5F", "333333", "1C1C1C", "080808"];
const grayBottom = ["EAEAEA", "C0C0C0", "969696", "777777", "4D4D4D", "292929", "111111"];

const svg = document.getElementById("hexes");
const svgNs = "http://www.w3.org/2000/svg";
const centerX = 101;

function hexPoints(x, y, r) {
    const w = r * 0.866;
    return [
        [x, y - r], [x + w, y - r / 2], [x + w, y + r / 2],
        [x, y + r], [x - w, y + r / 2], [x - w, y - r / 2]
    ].map(p => p.join(",")).join(" ");
}

function addHex(x, y, r, fill, stroke, width) {
    const hex = document.createElementNS(svgNs, "polygon");
    hex.setAttribute("points", hexPoints(x, y, r));
    hex.setAttribute("fill", "#" + fill);
    // same colour stroke closes the seams between neighbours
    hex.setAttribute("stroke", stroke || "#" + fill);
    hex.setAttribute("stroke-width", width || 0.5);
    svg.appendChild(hex);
}

colorRows.forEach((row, i) => {
    const colors = row.split(" ");
    colors.forEach((c, j) => {
        addHex(centerX + (j - (colors.length - 1) / 2) * 14, 12 + i * 12, 8.1, c);
    });
});

grayTop.forEach((c, j) => addHex(52 + j * 14, 184, 8.1, c));
grayBottom.forEach((c, j) => addHex(59 + j * 14, 196, 8.1, c));

// current colour: white ring, grey on the left, black on the right
addHex(178, 188, 17.5, "FFFFFF", "#a8a8a8", 1);
addHex(178, 188, 14, "111111", "#000", 1);
const ring = document.createElementNS(svgNs, "polyline");
ring.setAttribute("points", "178,170.500 193.200,179.300 193.200,196.700 178,205.500");
ring.setAttribute("fill", "none");
ring.setAttribute("stroke", "#000");
ring.setAttribute("stroke-width", "1.5");
svg.appendChild(ring);
```
